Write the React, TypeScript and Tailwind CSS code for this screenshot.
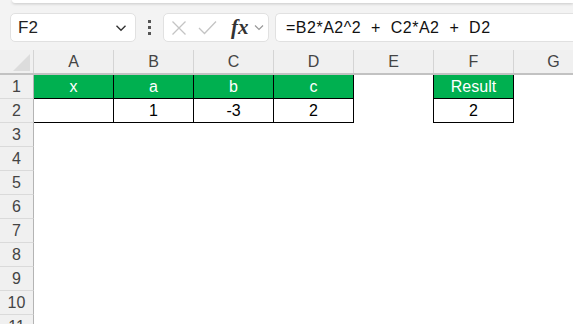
import React from "react";

const cols = ["A", "B", "C", "D", "E", "F", "G"];

type Cell = { v?: string; head?: boolean; box?: boolean };

const row1: Cell[] = [
  { v: "x", head: true, box: true },
  { v: "a", head: true, box: true },
  { v: "b", head: true, box: true },
  { v: "c", head: true, box: true },
  { box: false },
  { v: "Result", head: true, box: true },
  {},
];
const row2: Cell[] = [
  { v: "", box: true },
  { v: "1", box: true },
  { v: "-3", box: true },
  { v: "2", box: true },
  {},
  { v: "2", box: true },
  {},
];

function RowHead({ n }: { n: number }) {
  return (
    <div className="flex h-full w-[34px] shrink-0 items-center justify-center border-r border-b border-r-[#b4b4b4] border-b-[#dadada] bg-[#f0f0f0] text-[16px] text-[#444]">
      {n}
    </div>
  );
}

function DataRow({ n, cells }: { n: number; cells: Cell[] }) {
  return (
    <div className="flex h-[24px]">
      <RowHead n={n} />
      {cells.map((c, i) => {
        const nextBox = cells[i + 1]?.box;
        return (
          <div
            key={i}
            className={
              "flex h-full w-[80px] shrink-0 items-center justify-center text-[16px] " +
              (c.head ? "bg-[#00b050] text-white " : "text-black ") +
              (c.box ? "border-b border-r border-black " : nextBox ? "border-r border-black " : "")
            }
          >
            {c.v}
          </div>
        );
      })}
    </div>
  );
}

export default function App() {
  return (
    <div
      className="h-[324px] w-[573px] overflow-hidden bg-white"
      style={{ fontFamily: '"Liberation Sans", Arial, sans-serif' }}
    >
      <div className="h-[50px] bg-[#f3f3f3]">
        <div className="ml-[12px] h-[3px] rounded-bl-md bg-white shadow-[0_1px_3px_rgba(0,0,0,0.18)]" />
        <div className="mt-[10px] flex h-[29px] items-stretch">
          <div className="ml-[10px] flex w-[126px] items-center justify-between rounded-[5px] border border-[#e1e1e1] bg-white pl-[7px] pr-[8px] text-[17px] text-[#222]">
            <span>F2</span>
            <svg width="12" height="8" viewBox="0 0 12 8" fill="none" stroke="#333" strokeWidth="1.4">
              <path d="M1.5 1.8 6 6.2 10.5 1.8" />
            </svg>
          </div>
          <div className="flex w-[27px] flex-col items-center justify-center gap-[3px]">
            <span className="h-[3px] w-[3px] bg-[#555]" />
            <span className="h-[3px] w-[3px] bg-[#555]" />
            <span className="h-[3px] w-[3px] bg-[#555]" />
          </div>
          <div className="flex w-[106px] items-center rounded-[5px] border border-[#e1e1e1] bg-white pl-[7px]">
            <svg width="16" height="16" viewBox="0 0 16 16" fill="none" stroke="#c4c4c4" strokeWidth="1.3">
              <path d="M1.5 1.5 14.5 14.5M14.5 1.5 1.5 14.5" />
            </svg>
            <svg className="ml-[11px]" width="19" height="15" viewBox="0 0 19 15" fill="none" stroke="#c4c4c4" strokeWidth="1.3">
              <path d="M1 8 6.5 13.5 18 1.5" />
            </svg>
            <span
              className="ml-[14px] text-[21px] font-semibold italic leading-none text-[#333]"
              style={{ fontFamily: '"Liberation Serif", "Times New Roman", serif' }}
            >
              fx
            </span>
            <svg className="ml-[5px]" width="10" height="7" viewBox="0 0 10 7" fill="none" stroke="#999" strokeWidth="1.2">
              <path d="M1 1.5 5 5.5 9 1.5" />
            </svg>
          </div>
          <div className="ml-[6px] flex flex-1 items-center whitespace-pre rounded-l-[5px] border border-r-0 border-[#e1e1e1] bg-white pl-[10px] text-[16px] tracking-[0.5px] text-[#111]">
            {"=B2*A2^2  +  C2*A2  +  D2"}
          </div>
        </div>
      </div>

      <div className="flex h-[25px] border-b-2 border-[#c2c2c2] bg-[#f0f0f0]">
        <div className="relative w-[34px] shrink-0 border-r border-[#d4d4d4]">
          <div
            className="absolute bottom-[2px] right-[3px] h-[17px] w-[17px] bg-[#dcdcdc]"
            style={{ clipPath: "polygon(100% 0, 100% 100%, 0 100%)" }}
          />
        </div>
        {cols.map((c) => (
          <div
            key={c}
            className="flex w-[80px] shrink-0 items-center justify-center border-r border-[#d4d4d4] text-[16px] text-[#444]"
          >
            {c}
          </div>
        ))}
      </div>

      <DataRow n={1} cells={row1} />
      <DataRow n={2} cells={row2} />
      {[3, 4, 5, 6, 7, 8, 9, 10, 11].map((n) => (
        <div key={n} className="flex h-[24px]">
          <RowHead n={n} />
        </div>
      ))}
    </div>
  );
}
